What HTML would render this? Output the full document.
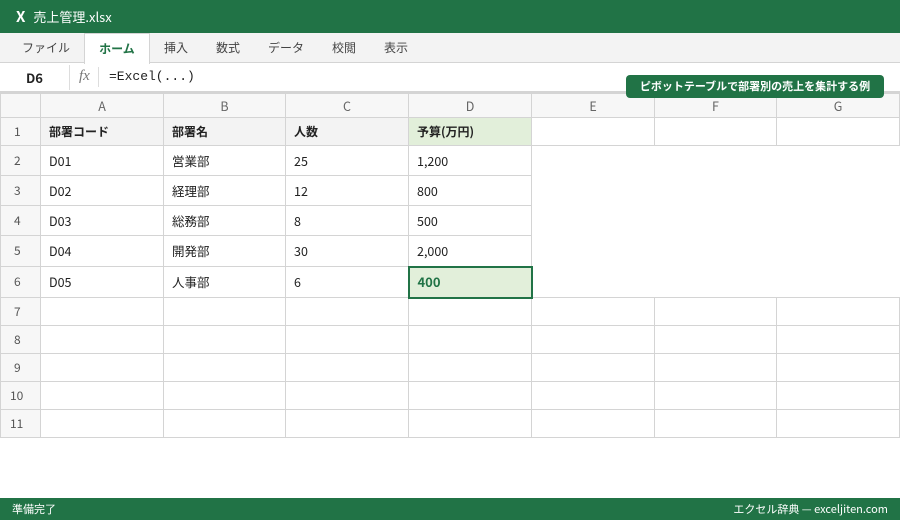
<!DOCTYPE html>
<html><head><meta charset="utf-8"><style>
*{margin:0;padding:0;box-sizing:border-box}
body{width:900px;height:520px;overflow:hidden;background:#fff;font-family:"Noto Sans CJK JP","Liberation Sans",sans-serif;position:relative;color:#222}
.title{position:absolute;left:0;top:0;width:900px;height:33px;background:#217346;color:#fff;font-size:13px;line-height:33px;padding-left:16px}
.title b{font-size:15px;margin-right:8px}
.tabs{position:absolute;top:33px;left:0;width:900px;height:30px;background:#f3f3f3;border-bottom:1px solid #d4d4d4}
.tab{position:absolute;top:0;height:30px;line-height:30px;font-size:12px;color:#444;text-align:center}
.tab.on{background:#fff;color:#217346;font-weight:bold;border:1px solid #d4d4d4;border-bottom:none;height:31px}
.fbar{position:absolute;top:63px;left:0;width:900px;height:30px;border-bottom:2px solid #d4d4d4;font-size:13px}
.nm{position:absolute;left:0;top:2px;width:70px;height:25px;line-height:25px;text-align:center;font-weight:bold;border-right:1px solid #ddd}
.fx{position:absolute;left:79px;top:5px;font-style:italic;color:#777;font-family:"Liberation Serif",serif;font-size:15px}
.fxs{position:absolute;left:98px;top:4px;height:20px;border-left:1px solid #ddd}
.ff{position:absolute;left:109px;top:6px;font-family:"Liberation Mono",monospace;font-size:13px}
.badge{position:absolute;left:626px;top:75px;width:258px;height:23px;background:#217346;color:#fff;font-size:11px;font-weight:bold;line-height:23px;text-align:center;border-radius:4px;z-index:5}
table{position:absolute;left:0;top:93px;border-collapse:collapse;table-layout:fixed;font-size:12.5px;line-height:16px}
td{border:1px solid #d4d4d4;padding:0 8px;white-space:nowrap}
td.h{background:#f7f7f7;color:#666;text-align:center;padding:0}
td.r{background:#f7f7f7;color:#555;text-align:left;padding-left:13px;font-size:12px}
td.b{font-weight:bold;background:#f3f3f3;font-size:12px}
td.g{background:#e2efda}
td.n{border:none}
td.sel{border:2px solid #217346;background:#e2efda;color:#217346;font-weight:bold;font-size:13px}
.status{position:absolute;left:0;top:498px;width:900px;height:22px;background:#217346;color:#fff;font-size:11px;line-height:22px;padding:0 12px}
.status span{float:right}
</style></head><body>
<div class="title"><b>X</b>売上管理.xlsx</div>
<div class="tabs">
<div class="tab" style="left:8px;width:76px">ファイル</div>
<div class="tab on" style="left:84px;width:66px">ホーム</div>
<div class="tab" style="left:150px;width:52px">挿入</div>
<div class="tab" style="left:202px;width:52px">数式</div>
<div class="tab" style="left:254px;width:64px">データ</div>
<div class="tab" style="left:318px;width:52px">校閲</div>
<div class="tab" style="left:370px;width:52px">表示</div>
</div>
<div class="fbar"><div class="nm">D6</div><div class="fx">fx</div><div class="fxs"></div><div class="ff">=Excel(...)</div></div>
<div class="badge">ピボットテーブルで部署別の売上を集計する例</div>
<table>
<colgroup><col style="width:40px"><col style="width:123px"><col style="width:122px"><col style="width:123px"><col style="width:123px"><col style="width:123px"><col style="width:122px"><col style="width:123px"></colgroup>
<tr style="height:24px"><td class="h"></td><td class="h">A</td><td class="h">B</td><td class="h">C</td><td class="h">D</td><td class="h">E</td><td class="h">F</td><td class="h">G</td></tr>
<tr style="height:28px"><td class="r">1</td><td class="b">部署コード</td><td class="b">部署名</td><td class="b">人数</td><td class="b g">予算(万円)</td><td></td><td></td><td></td></tr>
<tr style="height:30px"><td class="r">2</td><td>D01</td><td>営業部</td><td>25</td><td>1,200</td><td class="n" colspan="3"></td></tr>
<tr style="height:30px"><td class="r">3</td><td>D02</td><td>経理部</td><td>12</td><td>800</td><td class="n" colspan="3"></td></tr>
<tr style="height:30px"><td class="r">4</td><td>D03</td><td>総務部</td><td>8</td><td>500</td><td class="n" colspan="3"></td></tr>
<tr style="height:31px"><td class="r">5</td><td>D04</td><td>開発部</td><td>30</td><td>2,000</td><td class="n" colspan="3"></td></tr>
<tr style="height:31px"><td class="r">6</td><td>D05</td><td>人事部</td><td>6</td><td class="sel">400</td><td class="n" colspan="3"></td></tr>
<tr style="height:28px"><td class="r">7</td><td></td><td></td><td></td><td></td><td></td><td></td><td></td></tr>
<tr style="height:28px"><td class="r">8</td><td></td><td></td><td></td><td></td><td></td><td></td><td></td></tr>
<tr style="height:28px"><td class="r">9</td><td></td><td></td><td></td><td></td><td></td><td></td><td></td></tr>
<tr style="height:28px"><td class="r" style="padding-left:9px">10</td><td></td><td></td><td></td><td></td><td></td><td></td><td></td></tr>
<tr style="height:28px"><td class="r" style="padding-left:9px">11</td><td></td><td></td><td></td><td></td><td></td><td></td><td></td></tr>
</table>
<div class="status">準備完了<span>エクセル辞典 — exceljiten.com</span></div>
</body></html>
